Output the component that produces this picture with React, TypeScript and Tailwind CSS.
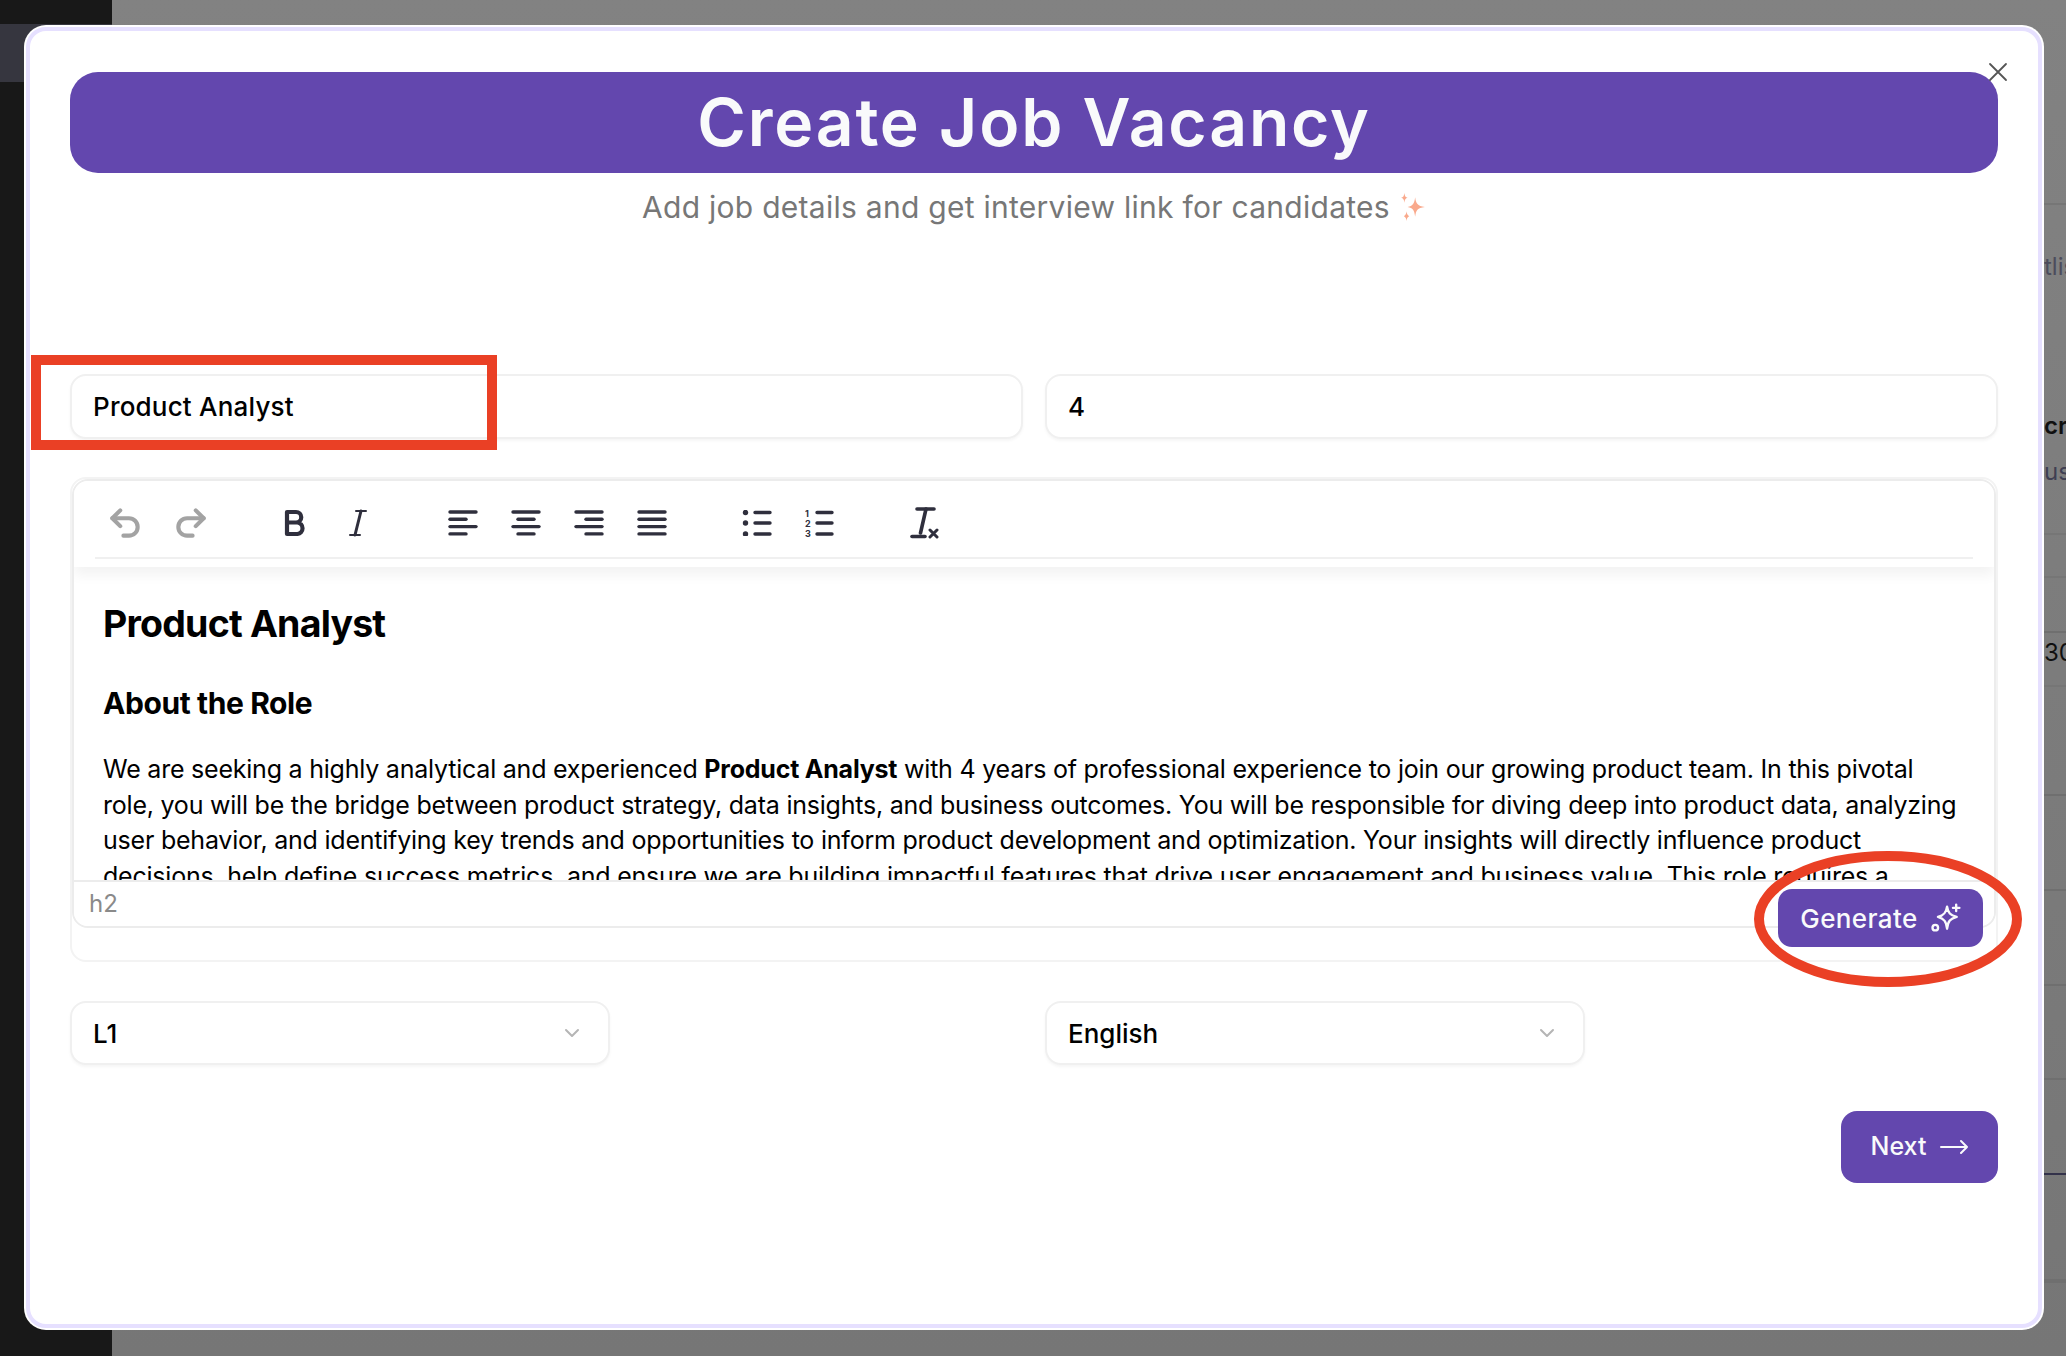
import { ChevronDown, Undo2, Redo2 } from "lucide-react";

const purple = "bg-[#6347ae]";

function Lines({ rows }: { rows: [number, number][] }) {
  return (
    <svg width="30" height="26" viewBox="0 0 30 26" fill="none" stroke="#2f2f3d" strokeWidth="3.4" strokeLinecap="round">
      {rows.map(([x1, x2], i) => (
        <line key={i} x1={x1} x2={x2} y1={2 + i * 7.3} y2={2 + i * 7.3} />
      ))}
    </svg>
  );
}

function BoldIcon() {
  return (
    <svg width="24" height="28" viewBox="0 0 24 28" fill="none" stroke="#2f2f3d" strokeWidth="4.2" strokeLinejoin="round">
      <path d="M4 3h9a5 5 0 0 1 0 10.500H4zM4 13.500h10.500a5.800 5.800 0 0 1 0 11.500H4z" />
    </svg>
  );
}

function ItalicIcon() {
  return (
    <svg width="18" height="28" viewBox="0 0 18 28" fill="none" stroke="#2f2f3d" strokeLinecap="round">
      <path d="M7 2h10M1 26h10" strokeWidth="2" />
      <path d="M12 2 6 26" strokeWidth="3" />
    </svg>
  );
}

function BulletIcon() {
  return (
    <svg width="30" height="26" viewBox="0 0 30 26" fill="none" stroke="#2f2f3d" strokeWidth="3.4" strokeLinecap="round">
      <circle cx="3.500" cy="2.500" r="2.700" fill="#2f2f3d" stroke="none" />
      <circle cx="3.500" cy="13" r="2.700" fill="#2f2f3d" stroke="none" />
      <circle cx="3.500" cy="24" r="2.700" fill="#2f2f3d" stroke="none" />
      <path d="M13 2.500h15M13 13h15M13 24h15" />
    </svg>
  );
}

function NumberedIcon() {
  return (
    <svg width="30" height="28" viewBox="0 0 30 28" fill="none" stroke="#2f2f3d" strokeWidth="3.4" strokeLinecap="round">
      <path d="M12 3.500h15M12 14h15M12 25h15" />
      <text x="0" y="7.500" fontSize="9" fontWeight="700" fill="#2f2f3d" stroke="none" fontFamily="Inter">1</text>
      <text x="0" y="18" fontSize="9" fontWeight="700" fill="#2f2f3d" stroke="none" fontFamily="Inter">2</text>
      <text x="0" y="28" fontSize="9" fontWeight="700" fill="#2f2f3d" stroke="none" fontFamily="Inter">3</text>
    </svg>
  );
}

function ClearIcon() {
  return (
    <svg width="30" height="32" viewBox="0 0 30 32" fill="none" stroke="#2f2f3d" strokeLinecap="round">
      <path d="M7 2h17" strokeWidth="3.600" />
      <path d="M16 2 10.500 26" strokeWidth="3.600" />
      <path d="M2 29.500h13" strokeWidth="3.600" />
      <path d="M20 23l7 7M27 23l-7 7" strokeWidth="3" />
    </svg>
  );
}

function ToolButton({ children }: { children: React.ReactNode }) {
  return <span className="flex h-10 w-[63px] items-center justify-center">{children}</span>;
}

function Toolbar() {
  return (
    <div className="relative z-10 h-[86px] shrink-0 bg-white shadow-[0_8px_12px_rgba(0,0,0,0.05)]">
      <div className="mx-[21px] flex h-[78px] items-center gap-[42px] border-b-2 border-[#f0f0f0] pt-[8px]">
        <div className="flex">
          <ToolButton><Undo2 size={38} strokeWidth={2.6} color="#a3a3a3" className="-ml-[4px]" /></ToolButton>
          <ToolButton><Redo2 size={38} strokeWidth={2.6} color="#a3a3a3" className="ml-[2px]" /></ToolButton>
        </div>
        <div className="flex">
          <ToolButton><BoldIcon /></ToolButton>
          <ToolButton><ItalicIcon /></ToolButton>
        </div>
        <div className="flex">
          <ToolButton><Lines rows={[[2, 28], [2, 18], [2, 28], [2, 18]]} /></ToolButton>
          <ToolButton><Lines rows={[[2, 28], [7, 23], [2, 28], [7, 23]]} /></ToolButton>
          <ToolButton><Lines rows={[[2, 28], [12, 28], [2, 28], [12, 28]]} /></ToolButton>
          <ToolButton><Lines rows={[[2, 28], [2, 28], [2, 28], [2, 28]]} /></ToolButton>
        </div>
        <div className="flex">
          <ToolButton><BulletIcon /></ToolButton>
          <ToolButton><NumberedIcon /></ToolButton>
        </div>
        <ToolButton><ClearIcon /></ToolButton>
      </div>
    </div>
  );
}

function Field({ value }: { value: string }) {
  return (
    <div className="flex h-[65px] items-center rounded-[16px] border-2 border-[#f0f0f0] bg-white pl-[21px] text-[26px] font-medium tracking-[0.2px] text-black shadow-[0_2px_3px_rgba(0,0,0,0.04)]">
      {value}
    </div>
  );
}

function SelectField({ value }: { value: string }) {
  return (
    <div className="flex h-[64px] w-[540px] items-center justify-between rounded-[16px] border-2 border-[#f0f0f0] bg-white pl-[21px] pr-[24px] text-[26px] font-medium text-black shadow-[0_2px_3px_rgba(0,0,0,0.04)]">
      {value}
      <ChevronDown size={24} strokeWidth={2} color="#b5b5b5" />
    </div>
  );
}

function Background() {
  return (
    <div className="flex h-full">
      <aside className="w-[112px] shrink-0 bg-[#181818] pt-[24px]">
        <div className="h-[58px] bg-[#36363f]" />
      </aside>
      <main className="flex flex-1 justify-end overflow-hidden bg-gradient-to-b from-[#828282] to-[#767676]">
        <div className="w-[22px] overflow-hidden whitespace-nowrap text-[24px] leading-[24px]">
          <div className="h-[205px] border-b-2 border-[#767676]" />
          <div className="h-[330px] border-b-2 border-[#767676] pt-[50px] text-[#4c4c5c]">
            <p>tlist</p>
            <p className="mt-[135px] font-semibold text-[#101010]">create</p>
            <p className="mt-[22px] text-[#3f3f52]">us</p>
          </div>
          <div className="h-[43px] border-b-2 border-[#767676]" />
          <div className="h-[55px] border-b-2 border-[#6f6f6f]" />
          <div className="h-[54px] border-b-2 border-[#767676] pt-[8px] text-[#101010]">30</div>
          <div className="h-[109px] border-b-2 border-[#6f6f6f]" />
          <div className="h-[95px] border-b-2 border-[#6f6f6f]" />
          <div className="h-[95px] border-b-2 border-[#6f6f6f]" />
          <div className="h-[94px] border-b-2 border-[#6f6f6f]" />
          <div className="h-[95px] border-b-2 border-[#33324a]" />
          <div className="h-[108px] border-b-4 border-[#6f6f6f]" />
        </div>
      </main>
    </div>
  );
}

function Modal() {
  return (
    <div className="absolute left-[26px] top-[27px] h-[1301px] w-[2016px] rounded-[20px] border-4 border-[#e6e0ff] bg-white pl-[40px] pr-[40px] pt-[41px] ring-2 ring-white">
      <button className="absolute right-[30px] top-[31px] z-10 text-[#555]" type="button">
        <svg width="20" height="20" viewBox="0 0 20 20" fill="none" stroke="currentColor" strokeWidth="1.8" strokeLinecap="round">
          <path d="M2 2l16 16M18 2 2 18" />
        </svg>
      </button>

      <div className={`flex h-[101px] items-center justify-center rounded-[28px] ${purple}`}>
        <h1 className="-mt-[2px] text-[66px] font-semibold leading-none tracking-[1.8px] text-[#f9fafb]">Create Job Vacancy</h1>
      </div>

      <p className="mt-[14px] flex h-[40px] items-center justify-center gap-[10px] text-[30px] tracking-[0.27px] text-[#777777]">
        Add job details and get interview link for candidates
        <svg width="26" height="28" viewBox="0 0 24 26" fill="#f9a98c">
          <path d="M14 4c.8 6 2 8 9 9-7 1-8.200 3-9 9-.8-6-2-8-7-9 5-1 6.200-3 7-9z" />
          <path d="M4 0c.4 3 1 4 3 4.500-2 .5-2.600 1.500-3 4.500-.4-3-1-4-3-4.500 2-.5 2.600-1.500 3-4.500z" />
          <path d="M6 17c.3 2.500.8 3.500 2.500 4.500-1.700 1-2.200 2-2.500 4.500-.3-2.500-.8-3.500-2.500-4.500 1.700-1 2.200-2 2.500-4.500z" />
        </svg>
      </p>

      <div className="mt-[147px] grid grid-cols-2 gap-[22px]">
        <Field value="Product Analyst" />
        <Field value="4" />
      </div>

      <div className="relative mt-[38px] h-[485px] rounded-[16px] border-2 border-[#f3f3f3]">
        <div className="flex h-[449px] flex-col overflow-hidden rounded-[16px] border-2 border-[#ececec] bg-white">
          <Toolbar />
          <div className="min-h-0 flex-1 overflow-hidden px-[29px] pt-[34px] text-black">
            <h2 className="text-[37.5px] font-bold leading-[46px] tracking-[-0.8px]">Product Analyst</h2>
            <h3 className="mt-[38px] text-[30px] font-bold leading-[36px] tracking-[-0.4px]">About the Role</h3>
            <p className="mt-[31px] text-[25px] leading-[35.5px] tracking-[-0.22px]">
              We are seeking a highly analytical and experienced <strong>Product Analyst</strong> with 4 years of professional experience to join our growing product team. In this pivotal role, you will be the bridge between product strategy, data insights, and business outcomes. You will be responsible for diving deep into product data, analyzing user behavior, and identifying key trends and opportunities to inform product development and optimization. Your insights will directly influence product decisions, help define success metrics, and ensure we are building impactful features that drive user engagement and business value. This role requires a
            </p>
          </div>
          <div className="flex h-[46px] shrink-0 items-center border-t-2 border-[#ececec] bg-white pl-[15px] text-[24px] text-[#8a8a8a]">
            h2
          </div>
        </div>

        <button className={`absolute right-[13px] top-[410px] flex h-[58px] w-[205px] items-center justify-center gap-[13px] rounded-[14px] text-[26px] font-medium tracking-[0.4px] text-[#f9fafb] ${purple}`} type="button">
          Generate
          <svg width="30" height="30" viewBox="0 0 28 28" fill="none" stroke="currentColor" strokeWidth="2.200" strokeLinejoin="round" strokeLinecap="round">
            <path d="M15 3.500c.8 5.500 3 8 9 9.500-6 1.500-8.200 4-9 11-.8-7-3-9.500-8.500-11 5.500-1.500 7.700-4 8.500-9.500z" />
            <path d="M23.500 1.500v6M20.500 4.500h6" />
            <circle cx="4" cy="23" r="2.600" />
          </svg>
        </button>
      </div>

      <div className="mt-[39px] grid grid-cols-2 gap-[22px]">
        <SelectField value="L1" />
        <SelectField value="English" />
      </div>

      <div className="mt-[46px] flex justify-end">
        <button className={`flex h-[72px] w-[157px] items-center justify-center gap-[14px] rounded-[16px] text-[25px] font-medium text-[#f9fafb] ${purple}`} type="button">
          Next
          <svg width="28" height="16" viewBox="0 0 28 16" fill="none" stroke="currentColor" strokeWidth="2" strokeLinecap="round" strokeLinejoin="round">
            <path d="M1 8h26M21 2l6 6-6 6" />
          </svg>
        </button>
      </div>
    </div>
  );
}

export default function App() {
  return (
    <div className="relative h-[1356px] w-[2066px] overflow-hidden font-['Inter',sans-serif]">
      <Background />
      <Modal />
      {/* red annotations drawn on top of the screenshot */}
      <div className="absolute left-[31px] top-[355px] h-[95px] w-[466px] border-[10px] border-[#ea4025]" />
      <svg className="absolute left-[1750px] top-[846px]" width="276" height="146" viewBox="0 0 276 146" fill="none">
        <ellipse cx="138" cy="73" rx="129" ry="63" stroke="#ea4025" strokeWidth="10" />
      </svg>
    </div>
  );
}
